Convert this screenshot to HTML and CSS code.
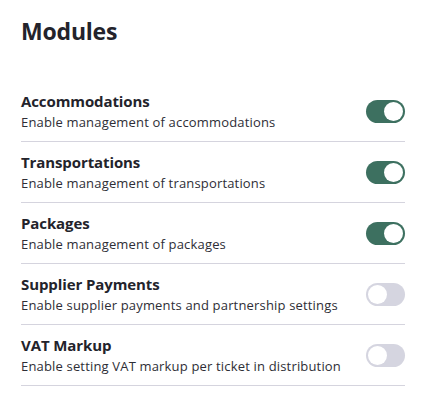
FILE: index.html
```html
<!DOCTYPE html>
<html lang="en">
<head>
<meta charset="utf-8">
<title>Modules</title>
<link rel="stylesheet" href="styles.css">
</head>
<body>
<main class="panel">
  <h1 class="title">Modules</h1>
  <ul class="modules">
    <li class="module">
      <div class="module-text">
        <div class="module-name">Accommodations</div>
        <div class="module-desc">Enable management of accommodations</div>
      </div>
      <span class="toggle toggle-on" role="switch" aria-checked="true"><span class="knob"></span></span>
    </li>
    <li class="module">
      <div class="module-text">
        <div class="module-name">Transportations</div>
        <div class="module-desc">Enable management of transportations</div>
      </div>
      <span class="toggle toggle-on" role="switch" aria-checked="true"><span class="knob"></span></span>
    </li>
    <li class="module">
      <div class="module-text">
        <div class="module-name">Packages</div>
        <div class="module-desc">Enable management of packages</div>
      </div>
      <span class="toggle toggle-on" role="switch" aria-checked="true"><span class="knob"></span></span>
    </li>
    <li class="module">
      <div class="module-text">
        <div class="module-name">Supplier Payments</div>
        <div class="module-desc">Enable supplier payments and partnership settings</div>
      </div>
      <span class="toggle" role="switch" aria-checked="false"><span class="knob"></span></span>
    </li>
    <li class="module">
      <div class="module-text">
        <div class="module-name">VAT Markup</div>
        <div class="module-desc">Enable setting VAT markup per ticket in distribution</div>
      </div>
      <span class="toggle" role="switch" aria-checked="false"><span class="knob"></span></span>
    </li>
  </ul>
</main>
</body>
</html>
```
FILE: styles.css
```css
html, body {
  margin: 0;
  padding: 0;
  background: #ffffff;
}

body {
  font-family: "Open Sans", "Noto Sans", sans-serif;
  color: #23232b;
}

.panel {
  padding: 14px 29px 0 21px;
}

.title {
  margin: 0;
  font-size: 23px;
  line-height: 34px;
  font-weight: 700;
  color: #23232b;
  letter-spacing: -0.2px;
}

.modules {
  list-style: none;
  margin: 33px 0 0;
  padding: 0;
}

.module {
  display: flex;
  align-items: center;
  justify-content: space-between;
  padding: 10px 0 9px;
  border-bottom: 1px solid #d5d4de;
}

.module-text {
  display: flex;
  flex-direction: column;
  gap: 2px;
}

.module-name {
  font-size: 15px;
  line-height: 20px;
  font-weight: 700;
  color: #23232b;
  letter-spacing: -0.1px;
}

.module-desc {
  font-size: 13px;
  line-height: 19px;
  color: #2e2e36;
  letter-spacing: 0.17px;
}

.toggle {
  position: relative;
  display: inline-flex;
  align-items: center;
  box-sizing: border-box;
  width: 39px;
  height: 23px;
  padding: 2px;
  border-radius: 12px;
  background: #d5d5e0;
  flex-shrink: 0;
}

.knob {
  width: 19px;
  height: 19px;
  border-radius: 50%;
  background: #ffffff;
  box-sizing: border-box;
}

.toggle-on {
  background: #3d7060;
  justify-content: flex-end;
}
```
